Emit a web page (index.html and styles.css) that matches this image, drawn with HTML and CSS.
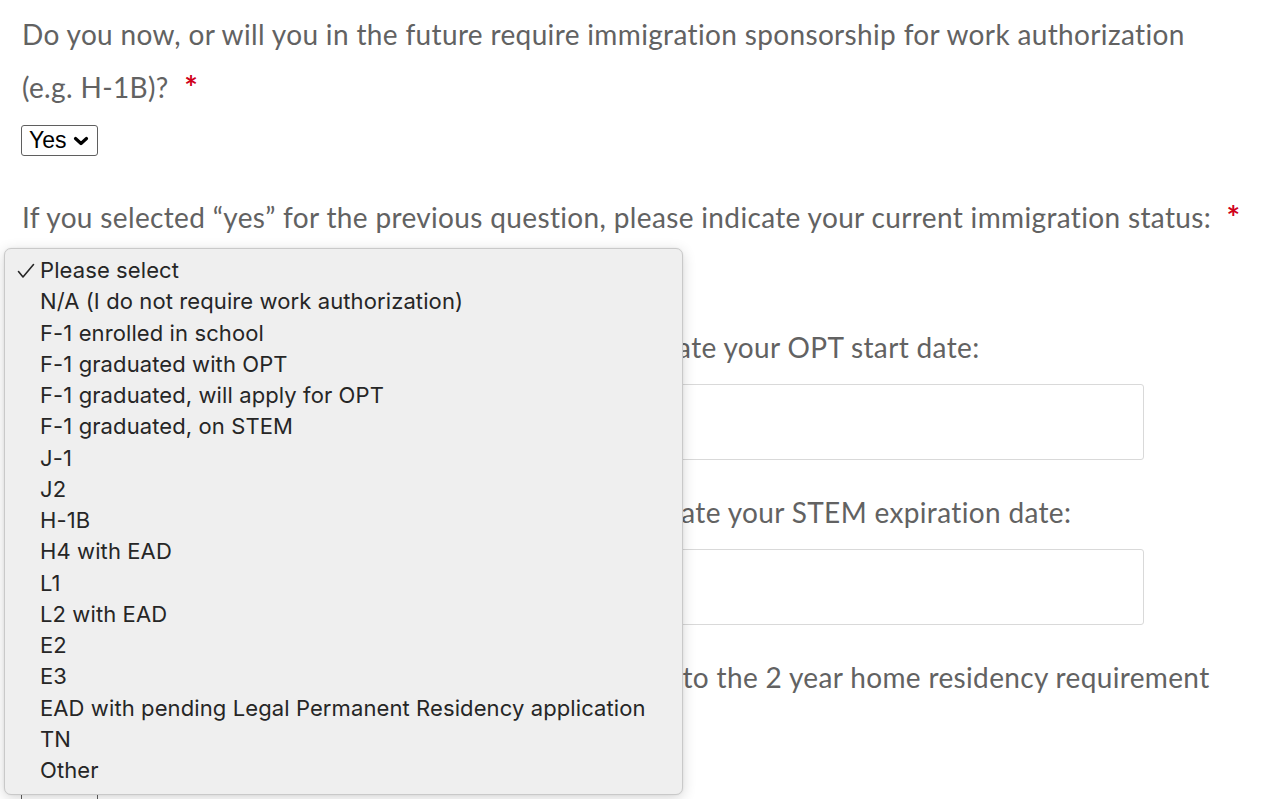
FILE: index.html
```html
<!DOCTYPE html>
<html lang="en">
<head>
<meta charset="utf-8">
<title>Application form</title>
<link rel="stylesheet" href="styles.css">
</head>
<body>
<main class="form">
  <div class="field">
    <label class="label">Do you now, or will you in the future require immigration sponsorship for work authorization <span class="nw">(e.g. H-1B)?</span> <span class="req">*</span></label>
    <div class="select small"><span>Yes</span><svg class="chev" viewBox="0 0 16 10" width="16" height="10"><path d="M2.5 2.5 L8 7.5 L13.5 2.5" fill="none" stroke="#000" stroke-width="3.2" stroke-linecap="round" stroke-linejoin="round"/></svg></div>
  </div>

  <div class="field f2">
    <label class="label">If you selected “yes” for the previous question, please indicate your current immigration status: <span class="req">*</span></label>
    <div class="select"><span>Please select</span></div>
  </div>

  <div class="field f3">
    <label class="label">If you selected F-1 graduated with OPT, please indicate your OPT start date:</label>
    <div class="input"></div>
  </div>

  <div class="field f4">
    <label class="label">If you selected F-1 graduated, on STEM, please indicate your STEM expiration date:</label>
    <div class="input"></div>
  </div>

  <div class="field f5">
    <label class="label">If you're currently on a J-1 or J2 visa are you subject to the 2 year home residency requirement (212e)?</label>
    <div class="select small last"><span>Yes</span></div>
  </div>
</main>

<div class="menu" role="listbox">
  <div class="opt selected"><svg class="check" viewBox="0 0 18 16" width="18" height="16"><path d="M1.5 8.5 L6 14 L16.5 1.5" fill="none" stroke="#262626" stroke-width="1.6" stroke-linecap="round" stroke-linejoin="round"/></svg>Please select</div>
  <div class="opt">N/A (I do not require work authorization)</div>
  <div class="opt">F-1 enrolled in school</div>
  <div class="opt">F-1 graduated with OPT</div>
  <div class="opt">F-1 graduated, will apply for OPT</div>
  <div class="opt">F-1 graduated, on STEM</div>
  <div class="opt">J-1</div>
  <div class="opt">J2</div>
  <div class="opt">H-1B</div>
  <div class="opt">H4 with EAD</div>
  <div class="opt">L1</div>
  <div class="opt">L2 with EAD</div>
  <div class="opt">E2</div>
  <div class="opt">E3</div>
  <div class="opt">EAD with pending Legal Permanent Residency application</div>
  <div class="opt">TN</div>
  <div class="opt">Other</div>
</div>
</body>
</html>
```
FILE: styles.css
```css
html, body {
  margin: 0;
  padding: 0;
  background: #fff;
}
body {
  overflow: hidden;
  height: 799px;
}
.form {
  padding: 8px 0 0 22px;
  width: 1222px;
  display: flex;
  flex-direction: column;
}
.field { display: flex; flex-direction: column; }
.label {
  display: block;
  font-family: "Lato", "Liberation Sans", sans-serif;
  font-size: 28px;
  letter-spacing: 0.35px;
  line-height: 53px;
  color: #626262;
  font-weight: 400;
}
.nw { white-space: nowrap; }
.req {
  color: #d0021b;
  font-weight: 700;
  font-size: 32px;
  vertical-align: -2px;
  margin-left: 8px;
}
.select {
  display: inline-flex;
  align-items: center;
  box-sizing: border-box;
  border: 1px solid #5f5f5f;
  border-radius: 3px;
  font-family: "Liberation Sans", Arial, sans-serif;
  font-size: 23px;
  color: #000;
  background: #fff;
  height: 31px;
  padding: 0 5px 0 7px;
  gap: 6px;
  align-self: flex-start;
  white-space: nowrap;
  overflow: hidden;
  margin-top: 11px;
  margin-left: -1px;
}
.select.small { width: 77px; }
.chev { display: block; margin-top: 1px; flex: none; }
.f2 { margin-top: 35px; }
.f3 { margin-top: 35px; }
.f4 { margin-top: 26px; }
.f5 { margin-top: 26px; }
.input {
  box-sizing: border-box;
  width: 1122px;
  height: 76px;
  border: 1px solid #d9d9d9;
  border-radius: 3px;
  margin-top: 10px;
}
.f5 .select.last {
  margin-top: 31px;
  align-items: flex-end;
  padding-bottom: 40px;
}

.menu {
  position: absolute;
  left: 4px;
  top: 248px;
  width: 679px;
  box-sizing: border-box;
  height: 547px;
  padding: 6px 0 0 0;
  background: #efefef;
  border: 1px solid #c9c9c9;
  border-radius: 7px;
  box-shadow: 0 3px 14px rgba(0,0,0,0.16), 0 0 2px rgba(0,0,0,0.08);
}
.opt {
  position: relative;
  height: 31.25px;
  line-height: 31.25px;
  padding-left: 35px;
  font-family: "Inter", "Roboto", sans-serif;
  font-size: 22px;
  letter-spacing: 0.1px;
  color: #262626;
  white-space: nowrap;
}
.check {
  position: absolute;
  left: 12px;
  top: 8px;
}
```
